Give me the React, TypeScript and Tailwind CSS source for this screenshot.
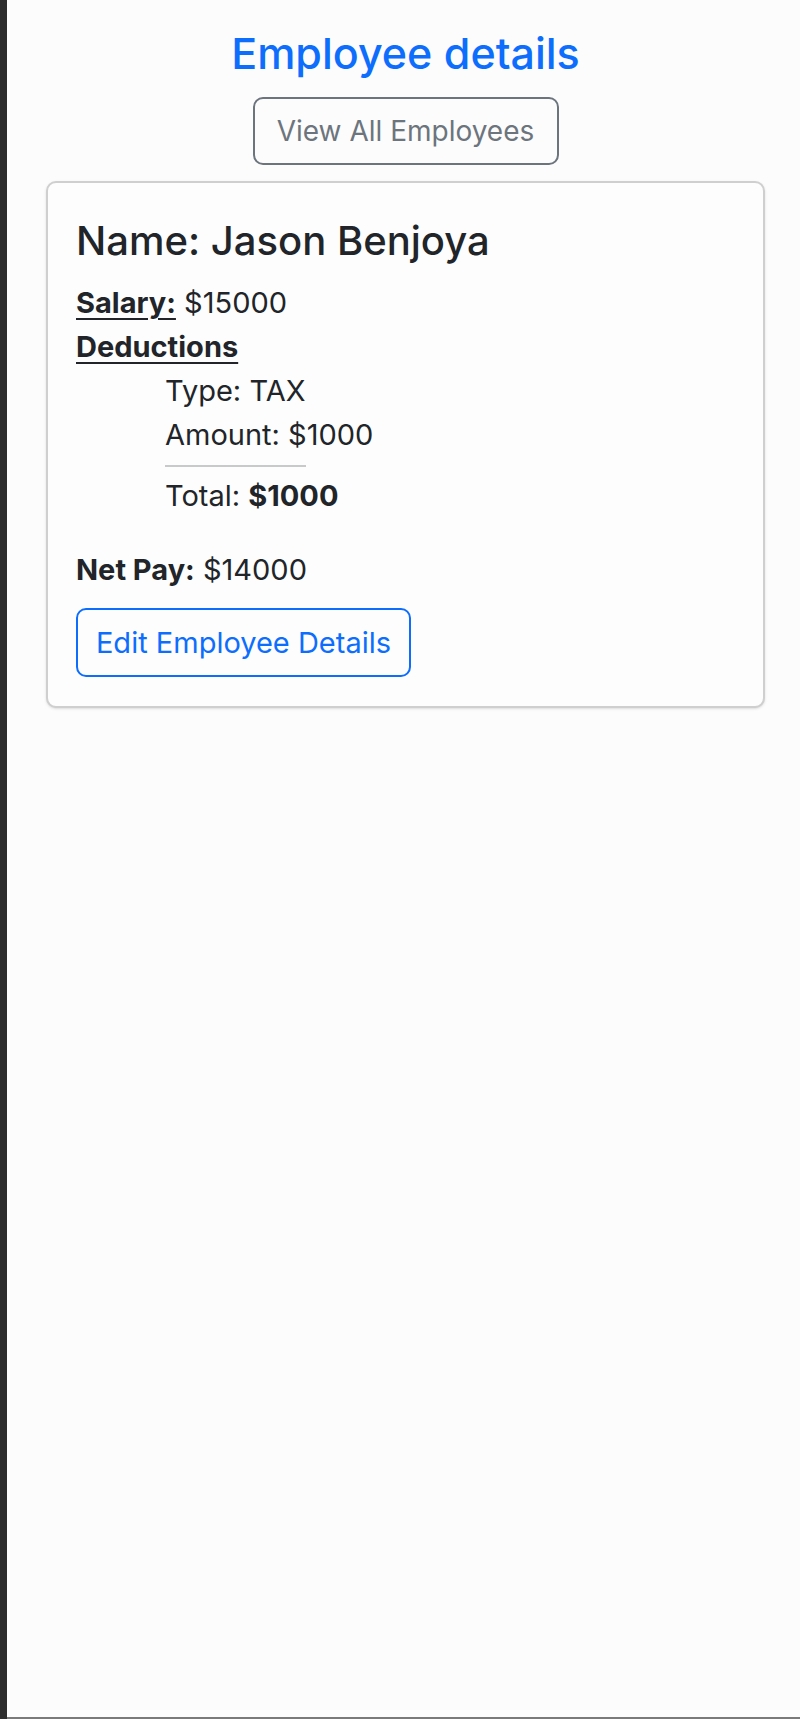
import React from 'react';

const font = { fontFamily: 'Inter, "Noto Sans", "Liberation Sans", sans-serif' };

const deductions = [{ type: 'TAX', amount: 1000 }];

const EmployeeCard = () => {
  const salary = 15000;
  const total = deductions.reduce((sum, d) => sum + d.amount, 0);

  return (
    <div className="mt-[16px] w-full rounded-[10px] border-2 border-[#cfcfcf] bg-[#fdfdfd] px-[28px] pt-[34px] pb-[29px] text-[29px] leading-[44px] text-[#212529] shadow-sm">
      <h3 className="text-[40px] leading-[47px] font-medium">Name: Jason Benjoya</h3>
      <div className="mt-[17px]">
        <span className="font-bold underline decoration-2 underline-offset-[5px]">Salary:</span> ${salary}
      </div>
      <div className="font-bold underline decoration-2 underline-offset-[5px]">Deductions</div>
      <div className="pl-[89px]">
        {deductions.map((d) => (
          <div key={d.type}>
            <div>Type: {d.type}</div>
            <div>Amount: ${d.amount}</div>
          </div>
        ))}
        <div className="mt-[8px] w-[141px] border-t-2 border-[#c8c9ca]" />
        <div className="mt-[7px]">
          Total: <span className="font-bold">${total}</span>
        </div>
      </div>
      <div className="mt-[30px]">
        <span className="font-bold">Net Pay:</span> ${salary - total}
      </div>
      <button className="mt-[16px] flex h-[69px] w-[335px] items-center justify-center rounded-[10px] border-2 border-[#0d6efd] text-[29px] leading-[44px] text-[#0d6efd]">
        Edit Employee Details
      </button>
    </div>
  );
};

export default function App() {
  return (
    <div className="flex h-[1719px] w-full bg-[#fcfcfc]" style={font}>
      <div className="w-[7px] shrink-0 bg-[#2c2c2c]" />
      <div className="flex-1 border-b-2 border-[#7a7a7a]">
        <div className="ml-[39px] flex w-[719px] flex-col items-center">
          <h1 className="mt-[27px] text-[43px] leading-[52px] font-medium text-[#0d6efd]">Employee details</h1>
          <button className="mt-[18px] flex h-[68px] w-[306px] items-center justify-center rounded-[10px] border-2 border-[#6c757d] text-[28px] leading-[44px] text-[#6c757d]">
            View All Employees
          </button>
          <EmployeeCard />
        </div>
      </div>
    </div>
  );
}
